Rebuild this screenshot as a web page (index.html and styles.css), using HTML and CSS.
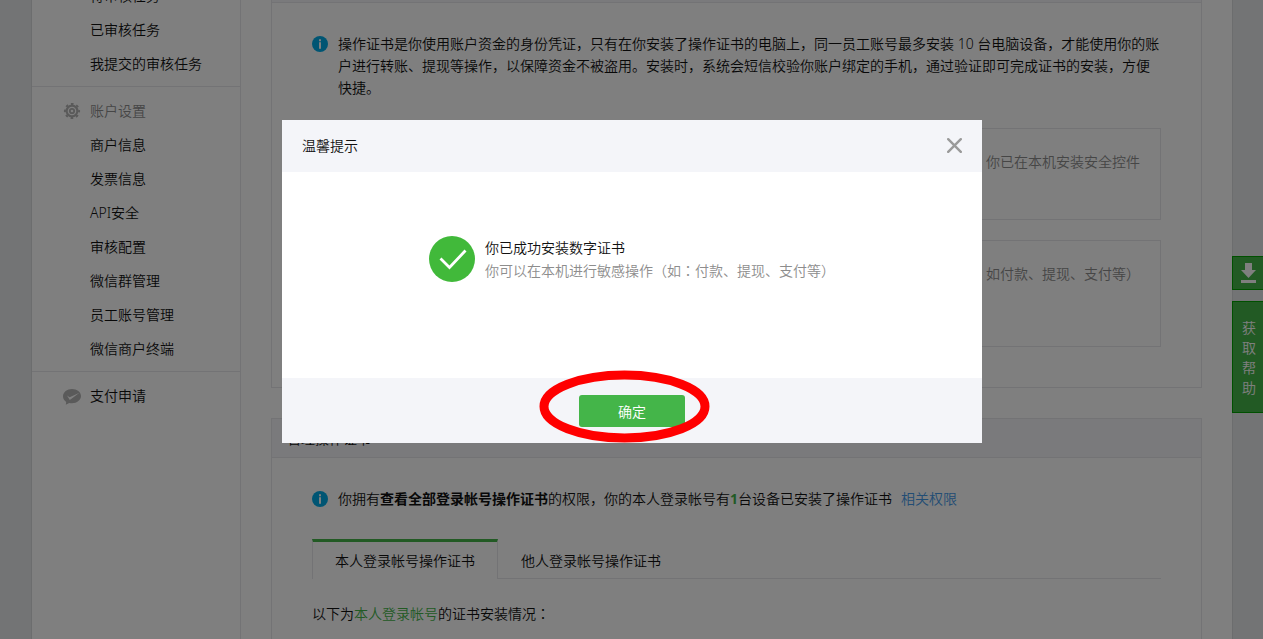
FILE: index.html
```html
<!DOCTYPE html>
<html lang="zh-CN">
<head>
<meta charset="utf-8">
<title>操作证书</title>
<link rel="stylesheet" href="styles.css">
</head>
<body>
<div class="shell">
  <nav class="sidebar">
    <ul class="group">
      <li><a href="#">待审核任务</a></li>
      <li><a href="#">已审核任务</a></li>
      <li><a href="#">我提交的审核任务</a></li>
    </ul>
    <div class="group">
      <h2 class="group-title">
        <svg class="group-icon" viewBox="0 0 18 18" width="18" height="18" aria-hidden="true">
          <g fill="none" stroke="#b4b4b4">
            <circle cx="9" cy="9" r="5.4" stroke-width="2.2"/>
            <circle cx="9" cy="9" r="2.2" stroke-width="1.8"/>
            <circle cx="9" cy="9" r="7.1" stroke-width="2" stroke-dasharray="2.6 2.976" stroke-dashoffset="1.3"/>
          </g>
        </svg>
        账户设置
      </h2>
      <ul>
        <li><a href="#">商户信息</a></li>
        <li><a href="#">发票信息</a></li>
        <li><a href="#">API安全</a></li>
        <li><a href="#">审核配置</a></li>
        <li><a href="#">微信群管理</a></li>
        <li><a href="#">员工账号管理</a></li>
        <li><a href="#">微信商户终端</a></li>
      </ul>
    </div>
    <div class="group">
      <a class="group-title strong" href="#">
        <svg class="group-icon" viewBox="0 0 18 18" width="18" height="18" aria-hidden="true">
          <path d="M9 2C4 2 0 5.200 0 9.300c0 2.300 1.200 4.300 3.200 5.600L2.800 17.800l3.400-1.900c.9.200 1.800.4 2.800.4 5 0 9-3.200 9-7.200S14 2 9 2z" fill="#b4b4b4"/>
          <path d="M4 8.500l2.600 1.800L16.500 5.800 6.800 13z" fill="#fff"/>
        </svg>
        支付申请
      </a>
    </div>
  </nav>

  <main class="content">
    <section class="card">
      <h2 class="card-head" aria-label="操作证书"></h2>
      <div class="card-body">
        <div class="note">
          <svg class="info" viewBox="0 0 16 16" width="16" height="16" aria-hidden="true"><circle cx="8" cy="8" r="8" fill="#00abe6"/><path d="M7 3.300h2v2H7zM7 6.300h2v6.500H7z" fill="#fff"/></svg>
          <p>操作证书是你使用账户资金的身份凭证，只有在你安装了操作证书的电脑上，同一员工账号最多安装 10 台电脑设备，才能使用你的账户进行转账、提现等操作，以保障资金不被盗用。安装时，系统会短信校验你账户绑定的手机，通过验证即可完成证书的安装，方便快捷。</p>
        </div>
        <div class="steps">
          <div class="step">你已在本机安装安全控件</div>
          <div class="step tall">如付款、提现、支付等）</div>
        </div>
      </div>
    </section>

    <section class="card">
      <h2 class="card-head">管理操作证书</h2>
      <div class="card-body">
        <div class="note">
          <svg class="info" viewBox="0 0 16 16" width="16" height="16" aria-hidden="true"><circle cx="8" cy="8" r="8" fill="#00abe6"/><path d="M7 3.300h2v2H7zM7 6.300h2v6.500H7z" fill="#fff"/></svg>
          <p>你拥有<strong>查看全部登录帐号操作证书</strong>的权限，你的本人登录帐号有<strong class="green">1</strong>台设备已安装了操作证书<a class="link" href="#">相关权限</a></p>
        </div>
        <div class="tabs" role="tablist">
          <button class="tab active" type="button" role="tab" aria-selected="true">本人登录帐号操作证书</button>
          <button class="tab" type="button" role="tab" aria-selected="false">他人登录帐号操作证书</button>
        </div>
        <p>以下为<span class="green">本人登录帐号</span>的证书安装情况<span class="colon" lang="zh-TW">：</span></p>
      </div>
    </section>
  </main>
</div>

<aside class="float-tools">
  <button class="tool" type="button" aria-label="下载">
    <svg viewBox="0 0 15 20" width="15" height="20" aria-hidden="true"><path d="M4 0h7v7h4l-7.500 8L0 7h4zM0 17h15v3H0z" fill="#fff"/></svg>
  </button>
  <button class="tool help" type="button">获取帮助</button>
</aside>

<div class="mask">
  <div class="dialog" role="dialog" aria-modal="true" aria-labelledby="dialog-title">
    <header class="dialog-head">
      <h3 id="dialog-title">温馨提示</h3>
      <button class="close" type="button" aria-label="关闭">
        <svg viewBox="0 0 15 15" width="15" height="15" aria-hidden="true"><path d="M1.200 1.200l12.600 12.600M13.800 1.200L1.200 13.800" stroke="#9a9a9a" stroke-width="2.400" stroke-linecap="round"/></svg>
      </button>
    </header>
    <div class="dialog-body">
      <svg viewBox="0 0 46 46" width="46" height="46" aria-hidden="true"><circle cx="23" cy="23" r="23" fill="#41b93a"/><path d="M11.500 22.500l9 9 16-17" fill="none" stroke="#fff" stroke-width="2.800"/></svg>
      <div>
        <p>你已成功安装数字证书</p>
        <p class="muted">你可以在本机进行敏感操作（如<span class="colon" lang="zh-TW">：</span>付款、提现、支付等<span class="colon" lang="zh-TW">）</span></p>
      </div>
    </div>
    <footer class="dialog-foot">
      <button class="confirm" type="button">确定</button>
      <svg class="ring" viewBox="0 0 172 74" width="172" height="74" aria-hidden="true"><ellipse cx="86.500" cy="36.500" rx="80.500" ry="31.500" fill="none" stroke="#f00" stroke-width="9"/></svg>
    </footer>
  </div>
</div>
</body>
</html>
```
FILE: styles.css
```css
* { box-sizing: border-box; margin: 0; padding: 0; }

body {
  height: 100vh;
  overflow: hidden;
  background: #e7e8eb;
  color: #111;
  font: 350 14px/22px "Noto Sans", "Noto Sans CJK SC", sans-serif;
}

ul { list-style: none; }
a { color: inherit; text-decoration: none; }
strong { font-weight: 700; }
button { font: inherit; color: inherit; border: 0; background: none; cursor: pointer; }
svg { display: block; flex: none; }

.shell {
  display: flex;
  height: 100vh;
  overflow: hidden;
  margin: 0 30px 0 31px;
  background: #fff;
  border: solid #d9dadc;
  border-width: 0 1px;
}

.sidebar {
  flex: none;
  width: 209px;
  border-right: 1px solid #e7e7eb;
}
.group { padding: 7px 0 5px; }
.group:first-child { margin-top: -28px; }
.group + .group { border-top: 1px solid #e7e7eb; }
.group li a { display: block; padding-left: 58px; line-height: 34px; }
.group-title {
  display: flex;
  align-items: center;
  gap: 9px;
  padding-left: 31px;
  font-size: 14px;
  font-weight: inherit;
  line-height: 34px;
  color: #8d8d8d;
}
.group-title.strong { color: inherit; }

.content { flex: 1; min-width: 0; padding: 0 30px; }
.card { margin-bottom: 30px; border: 1px solid #e7e7eb; }
.card:first-child { margin-top: -37px; }
.card-head {
  height: 39px;
  padding: 0 15px;
  background: #f4f5f9;
  border-bottom: 1px solid #e7e7eb;
  font-size: 14px;
  font-weight: inherit;
  line-height: 40px;
}
.card-body { padding: 30px 40px 40px; }
.note { display: flex; gap: 10px; }
.info { margin-top: 3px; }
.link { margin-left: 9px; color: #459ae9; }
.green { color: #44b549; }
.colon { font-family: "Noto Sans CJK TC", sans-serif; }

.steps { display: grid; gap: 20px; margin-top: 29px; }
.step {
  min-height: 92px;
  padding: 22px 20px;
  border: 1px solid #e7e7eb;
  text-align: right;
  color: #8d8d8d;
}
.step.tall { min-height: 107px; }

.tabs { display: flex; margin: 29px 0 23px; }
.tabs::after { content: ""; flex: 1; border-bottom: 1px solid #e7e7eb; }
.tab {
  height: 40px;
  padding: 5px 23px 0;
  border-bottom: 1px solid #e7e7eb;
}
.tab.active {
  padding: 0 22px;
  border: solid #e7e7eb;
  border-width: 0 1px;
  border-top: 3px solid #44b549;
}

.float-tools {
  position: fixed;
  top: 256px;
  right: 0;
  display: grid;
  gap: 11px;
  width: 31px;
}
.tool {
  height: 34px;
  padding: 0 8px;
  background: #44b549;
  border: 1px solid #00a000;
  border-right: 0;
  color: #fff;
}
.tool.help { height: auto; padding: 16px 7px 14px 8px; line-height: 20px; }

.mask {
  position: fixed;
  inset: 0;
  display: flex;
  justify-content: center;
  align-items: flex-start;
  padding: 120px 0 0 1px;
  background: rgba(0, 0, 0, .5);
}
.dialog { width: 700px; background: #fff; }
.dialog-head {
  display: flex;
  justify-content: space-between;
  align-items: center;
  height: 52px;
  padding: 0 20px;
  background: #f4f5f9;
}
.dialog-head h3 { font-size: 14px; font-weight: inherit; }
.close { margin-bottom: 2px; }
.dialog-body {
  display: flex;
  justify-content: center;
  align-items: flex-end;
  gap: 10px;
  padding: 64px 20px 96px;
}
.muted { color: #8d8d8d; }
.dialog-foot {
  position: relative;
  display: flex;
  justify-content: center;
  padding: 17px 0 16px;
  background: #f4f5f9;
}
.confirm {
  width: 106px;
  height: 32px;
  padding-top: 1px;
  background: #44b549;
  border-radius: 3px;
  color: #fff;
}
.ring { position: absolute; top: -8px; left: 256px; pointer-events: none; }
```
